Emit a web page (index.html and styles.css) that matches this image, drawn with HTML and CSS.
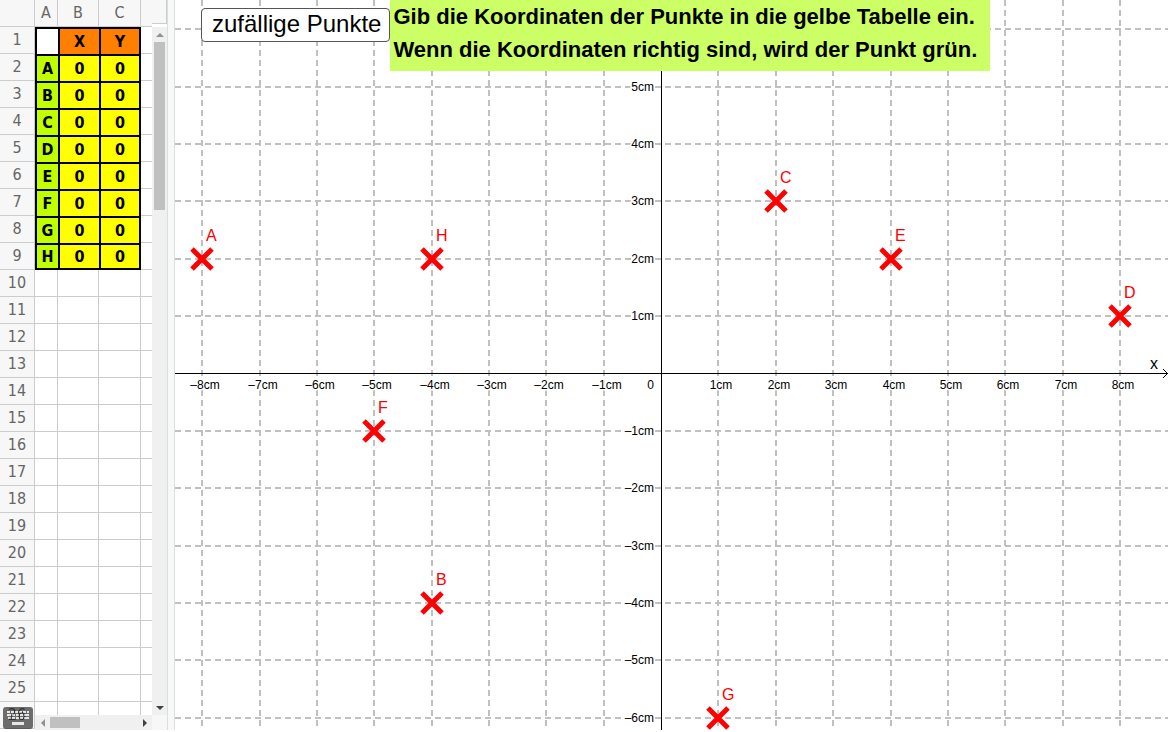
FILE: index.html
```html
<!DOCTYPE html>
<html lang="de">
<head>
  <meta charset="UTF-8">
  <meta name="viewport" content="width=device-width, initial-scale=1.0">
  <title>Koordinaten ablesen</title>
  <link rel="stylesheet" href="styles.css">
</head>
<body>
  <div class="app">
    <!-- Spreadsheet -->
    <section class="sheet">
      <div class="sheet-view">
        <table class="cells">
          <colgroup>
            <col class="col-num"><col class="col-a"><col class="col-b"><col class="col-c"><col class="col-d">
          </colgroup>
          <thead>
            <tr><th class="corner"></th><th>A</th><th>B</th><th>C</th><th></th></tr>
          </thead>
          <tbody id="rows"></tbody>
        </table>
        <div class="hscroll">
          <button class="arrow left" aria-label="Nach links"></button>
          <div class="hthumb"></div>
          <button class="arrow right" aria-label="Nach rechts"></button>
        </div>
        <button class="keyboard" aria-label="Tastatur">
          <svg width="30" height="22" viewBox="0 0 30 22">
            <rect width="30" height="22" rx="3" fill="#111"/>
            <g fill="#ddd">
              <path d="M4 4h3v2H4zM8 4h3v2H8zM12 4h3v2h-3zM16 4h3v2h-3zM20 4h3v2h-3zM24 4h2v2h-2z"/>
              <path d="M4 7h4v2H4zM9 7h3v2H9zM13 7h3v2h-3zM17 7h3v2h-3zM21 7h5v2h-5z"/>
              <path d="M5 10h3v2H5zM9 10h3v2H9zM13 10h3v2h-3zM17 10h3v2h-3zM21 10h5v2h-5z"/>
              <path d="M9 15h12v3H9z"/>
            </g>
          </svg>
        </button>
      </div>
      <div class="vscroll">
        <div class="vscroll-head"></div>
        <div class="vtrack">
          <button class="arrow up" aria-label="Nach oben"></button>
          <div class="vthumb"></div>
          <button class="arrow down" aria-label="Nach unten"></button>
        </div>
      </div>
    </section>

    <div class="splitter"></div>

    <!-- Graphics view -->
    <main class="graph">
      <svg id="plot" class="plot"></svg>
      <div class="overlay">
        <button class="random">zufällige Punkte</button>
        <p class="task">Gib die Koordinaten der Punkte in die gelbe Tabelle ein.<br>Wenn die Koordinaten richtig sind, wird der Punkt grün.</p>
      </div>
    </main>
  </div>
  <script src="script.js"></script>
</body>
</html>
```
FILE: styles.css
```css
* {
  margin: 0;
  padding: 0;
  box-sizing: border-box;
}

body {
  height: 100vh;
  padding: 0 2px 2px 0;
  background: #fff;
  font-family: "Liberation Sans", Arial, sans-serif;
  overflow: hidden;
}

button {
  border: none;
  background: none;
  cursor: pointer;
}

.app {
  display: flex;
  height: 100%;
}

/* Spreadsheet */
.sheet {
  display: flex;
  flex: none;
  font-family: "DejaVu Sans Condensed", "DejaVu Sans", sans-serif;
  font-size: 16px;
}
.sheet-view {
  position: relative;
  width: 152px;
  overflow: hidden;
}
.cells {
  width: 164px;
  table-layout: fixed;
  border-collapse: separate;
  border-spacing: 0;
}
.col-num { width: 35px; }
.col-a { width: 23px; }
.col-b { width: 41px; }
.col-c { width: 42px; }
.cells th,
.cells td {
  height: 27px;
  border-right: 1px solid #ccc;
  border-bottom: 1px solid #ccc;
  text-align: center;
  line-height: 18px;
}
.cells th {
  background: #f7f7f7;
  color: #666;
  font-weight: normal;
}
.cells .box {
  border: solid #000;
  border-width: 2px 0 0 2px;
  color: #000;
  font-weight: bold;
}
.cells .box.last-col { border-right-width: 2px; }
.cells .box.last-row { border-bottom-width: 2px; }
.cells .name { background: #bfff00; }
.cells .head { background: #ff7f00; }
.cells .value { background: #ff0; }

/* Scrollbars */
.hscroll {
  position: absolute;
  left: 35px;
  right: 0;
  bottom: 0;
  height: 15px;
  display: flex;
  align-items: center;
  background: #f0f0f0;
}
.hthumb {
  width: 30px;
  height: 11px;
  margin-right: auto;
  background: #c0c0c0;
}
.vscroll {
  display: flex;
  flex-direction: column;
  width: 15px;
  border-bottom: 15px solid #f7f7f7;
}
.vscroll-head {
  height: 24px;
  margin-bottom: 3px;
  background: #f7f7f7;
  border-right: 1px solid #ccc;
  border-bottom: 1px solid #ccc;
}
.vtrack {
  flex: 1;
  display: flex;
  flex-direction: column;
  align-items: center;
  background: #f0f0f0;
}
.vthumb {
  width: 11px;
  height: 168px;
  margin-bottom: auto;
  background: #c0c0c0;
}
.arrow {
  display: flex;
  align-items: center;
  justify-content: center;
  width: 15px;
  height: 15px;
}
.arrow::before {
  content: '';
  border: 4px solid transparent;
}
.arrow.up::before { border-top: none; border-bottom-color: #909090; }
.arrow.down::before { border-bottom: none; border-top-color: #404040; }
.arrow.left::before { border-left: none; border-right-color: #909090; }
.arrow.right::before { border-right: none; border-left-color: #404040; }

.keyboard {
  position: absolute;
  left: 3px;
  bottom: 1px;
  height: 22px;
  opacity: 0.6;
}
.keyboard svg {
  display: block;
}

.splitter {
  flex: none;
  width: 8px;
  background: #f7f8f8;
  border: solid #ddd;
  border-width: 0 1px;
}

/* Graphics view */
.graph {
  position: relative;
  flex: 1;
  min-width: 0;
  overflow: hidden;
}
.plot {
  display: block;
  width: 100%;
  height: 100%;
}
.grid {
  stroke: #c0c0c0;
  stroke-width: 2;
  stroke-dasharray: 6 4;
}
.axis {
  fill: none;
  stroke: #000;
}
.tick {
  font-size: 12px;
  stroke: #fff;
  stroke-width: 3px;
  paint-order: stroke;
}
.tick-x { text-anchor: middle; }
.tick-y { text-anchor: end; }
.axis-name { font-size: 16px; }
.cross {
  stroke: #f00;
  stroke-width: 5;
}
.label {
  fill: #f00;
  font-size: 16px;
}

.overlay {
  position: absolute;
  top: 0;
  left: 26px;
  display: flex;
  align-items: flex-start;
  white-space: nowrap;
}
.random {
  height: 34px;
  margin-top: 8px;
  padding: 0 8px 2px 10px;
  border: 1px solid #555;
  border-radius: 4px;
  background: #fff;
  color: #000;
  font-family: inherit;
  font-size: 24px;
}
.task {
  width: 600px;
  padding: 0 3px 5px;
  background: #cf6;
  font-size: 22px;
  font-weight: bold;
  line-height: 33px;
}
```
FILE: script.js
```js
const points = {
  A: [-8, 2], B: [-4, -4], C: [2, 3], D: [8, 1],
  E: [4, 2], F: [-5, -1], G: [1, -6], H: [-4, 2]
};
const names = Object.keys(points);

// Spreadsheet rows
function addCell(row, text, classes) {
  const cell = row.insertCell();
  cell.textContent = text;
  cell.className = classes || '';
}

const tbody = document.getElementById('rows');
for (let r = 1; r <= 26; r++) {
  const row = tbody.insertRow();
  const th = document.createElement('th');
  th.textContent = r;
  row.appendChild(th);
  if (r === 1) {
    addCell(row, '', 'box');
    addCell(row, 'X', 'box head');
    addCell(row, 'Y', 'box head last-col');
  } else if (r <= names.length + 1) {
    const last = r === names.length + 1 ? ' last-row' : '';
    addCell(row, names[r - 2], 'box name' + last);
    addCell(row, '0', 'box value' + last);
    addCell(row, '0', 'box value last-col' + last);
  } else {
    addCell(row, '');
    addCell(row, '');
    addCell(row, '');
  }
  addCell(row, '');
}

// Coordinate system
const plot = document.getElementById('plot');
const task = document.querySelector('.task');
const unit = 57.35;
const origin = { x: 486.1, y: 373.5 };

function add(tag, attrs, text) {
  const el = document.createElementNS('http://www.w3.org/2000/svg', tag);
  for (const key in attrs) el.setAttribute(key, attrs[key]);
  if (text) el.textContent = text;
  plot.appendChild(el);
}

function px(x) { return Math.round(origin.x + x * unit); }
function py(y) { return Math.round(origin.y - y * unit); }
function tickText(n) { return (n < 0 ? '–' : '') + Math.abs(n) + 'cm'; }

function draw() {
  const w = plot.clientWidth;
  const h = plot.clientHeight;
  const xs = [];
  const ys = [];
  plot.replaceChildren();

  for (let i = -20; i <= 40; i++) {
    if (i === 0) continue;
    if (px(i) > 0 && px(i) < w) xs.push(i);
    if (py(i) > 0 && py(i) < h) ys.push(i);
  }
  xs.forEach(i => add('path', { class: 'grid', d: `M${px(i)} 0V${h}` }));
  ys.forEach(i => add('path', { class: 'grid', d: `M0 ${py(i)}H${w}` }));

  add('path', { class: 'axis', d: `M0 373.5H${w}M${w - 5} 369l4.5 4.5l-4.5 4.5` });
  add('path', { class: 'axis', d: `M486.5 0V${h}` });

  xs.forEach(i => add('text', { class: 'tick tick-x', x: px(i) + 3, y: 389 }, tickText(i)));
  // no labels behind the task text
  ys.filter(i => py(i) > task.offsetHeight)
    .forEach(i => add('text', { class: 'tick tick-y', x: 479, y: py(i) + 4 }, tickText(i)));
  add('text', { class: 'tick tick-y', x: 479, y: 389 }, '0');
  add('text', { class: 'axis-name', x: w - 18, y: 369 }, 'x');

  names.forEach(name => {
    const x = px(points[name][0]);
    const y = py(points[name][1]);
    add('path', { class: 'cross', d: `M${x - 10} ${y - 10}l20 20m0 -20l-20 20` });
    add('text', { class: 'label', x: x + 4, y: y - 18 }, name);
  });
}

draw();
window.addEventListener('resize', draw);
```
